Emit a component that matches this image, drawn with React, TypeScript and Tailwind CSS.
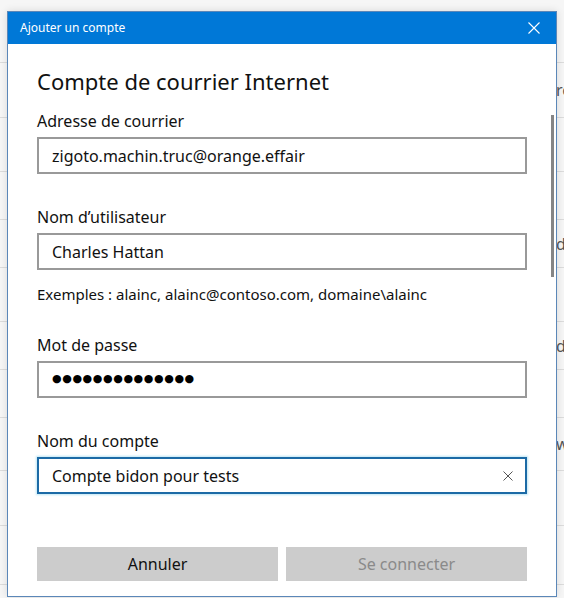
import React from "react";

const rows: { h: number; t?: string }[] = [
  { h: 63 },
  { h: 55, t: "ro" },
  { h: 54 },
  { h: 48 },
  { h: 48, t: "d" },
  { h: 54 },
  { h: 48, t: "d" },
  { h: 48 },
  { h: 53, t: "w" },
  { h: 55 },
  { h: 59 },
];

function Label({ children }: { children: React.ReactNode }) {
  return <div className="text-[16px] leading-[22px] text-[#111]">{children}</div>;
}

function Field({ children, focused }: { children: React.ReactNode; focused?: boolean }) {
  return (
    <div
      className={
        focused
          ? "mt-[5px] h-[37px] border-2 border-[#1c6aa6] shadow-[0_0_2px_1px_#bfe6f5] flex items-center pl-[13px] pr-[12px] text-[16px] text-[#111]"
          : "mt-[5px] h-[37px] border-2 border-[#999999] flex items-center pl-[13px] pr-[12px] text-[16px] text-[#111]"
      }
    >
      {children}
    </div>
  );
}

export default function App() {
  return (
    <div
      className="relative w-[564px] h-[598px] overflow-hidden bg-[#f6f6f6]"
      style={{ fontFamily: '"Noto Sans", "Open Sans", sans-serif' }}
    >
      {/* background list */}
      <div className="flex flex-col">
        {rows.map((r, i) => (
          <div
            key={i}
            className="border-b border-[#dcdcdc] flex items-center pl-[556px] text-[16px] text-[#555] whitespace-nowrap"
            style={{ height: r.h }}
          >
            {r.t}
          </div>
        ))}
      </div>

      {/* dialog */}
      <div className="absolute left-[7px] top-[11px] w-[550px] h-[586px] bg-white border border-[#5b87b8] shadow-[0_0_8px_rgba(0,0,0,0.12)] flex flex-col">
        <div className="h-[32px] bg-[#0078d7] flex items-center justify-between pl-[12px] pr-[16px]">
          <span className="text-white text-[12px]">Ajouter un compte</span>
          <svg width="12" height="12" viewBox="0 0 12 12" className="text-white">
            <path d="M0.5 0.5 L11.5 11.5 M11.5 0.5 L0.5 11.5" stroke="currentColor" strokeWidth="1.1" />
          </svg>
        </div>
        <div className="relative flex-1 px-[29px]">
          <div className="absolute right-[2px] top-[71px] w-[3px] h-[162px] bg-[#858585]" />
          <div className="mt-[22px] text-[22px] leading-[30px] text-[#111]">Compte de courrier Internet</div>
          <div className="mt-[14px]">
            <Label>Adresse de courrier</Label>
            <Field>zigoto.machin.truc@orange.effair</Field>
          </div>
          <div className="mt-[32px]">
            <Label>Nom d’utilisateur</Label>
            <Field>Charles Hattan</Field>
          </div>
          <div className="mt-[14px] text-[15px] leading-[20px] text-[#111]">
            Exemples : alainc, alainc@contoso.com, domaine\alainc
          </div>
          <div className="mt-[30px]">
            <Label>Mot de passe</Label>
            <Field>
              <span className="text-[11px] tracking-[0.6px] text-black" style={{ fontFamily: '"DejaVu Sans", sans-serif' }}>
                ●●●●●●●●●●●●●●
              </span>
            </Field>
          </div>
          <div className="mt-[32px]">
            <Label>Nom du compte</Label>
            <Field focused>
              <span className="flex-1">Compte bidon pour tests</span>
              <svg width="10" height="10" viewBox="0 0 10 10" className="text-[#555]">
                <path d="M0.5 0.5 L9.5 9.5 M9.5 0.5 L0.5 9.5" stroke="currentColor" strokeWidth="1" />
              </svg>
            </Field>
          </div>
          <div className="mt-[53px] flex gap-[8px]">
            <div className="flex-1 h-[34px] bg-[#cccccc] flex items-center justify-center text-[16px] text-[#111]">
              Annuler
            </div>
            <div className="flex-1 h-[34px] bg-[#cccccc] flex items-center justify-center text-[16px] text-[#8a8a8a]">
              Se connecter
            </div>
          </div>
        </div>
      </div>
    </div>
  );
}
